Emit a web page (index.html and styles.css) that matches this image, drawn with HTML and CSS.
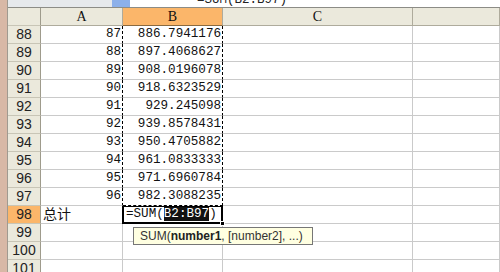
FILE: index.html
```html
<!doctype html>
<html>
<head>
<meta charset="utf-8">
<title>SUM</title>
<link rel="stylesheet" href="styles.css">
</head>
<body>
<div class="win">
	<div class="frame"></div>
	<div class="main">
		<div class="fbar">
			<div class="fbar-l"></div>
			<div class="fbar-blue"></div>
			<div class="fbar-r"><span class="ftext">=SUM(B2:B97)</span></div>
		</div>
		<div class="grid">
			<div class="row head">
				<div class="c rh"></div>
				<div class="c ch">A</div>
				<div class="c ch sel">B</div>
				<div class="c ch">C</div>
				<div class="c ch"></div>
			</div>
			<div class="row"><div class="c rh">88</div><div class="c a">87</div><div class="c b">886.7941176</div><div class="c"></div><div class="c"></div></div>
			<div class="row"><div class="c rh">89</div><div class="c a">88</div><div class="c b">897.4068627</div><div class="c"></div><div class="c"></div></div>
			<div class="row"><div class="c rh">90</div><div class="c a">89</div><div class="c b">908.0196078</div><div class="c"></div><div class="c"></div></div>
			<div class="row"><div class="c rh">91</div><div class="c a">90</div><div class="c b">918.6323529</div><div class="c"></div><div class="c"></div></div>
			<div class="row"><div class="c rh">92</div><div class="c a">91</div><div class="c b">929.245098</div><div class="c"></div><div class="c"></div></div>
			<div class="row"><div class="c rh">93</div><div class="c a">92</div><div class="c b">939.8578431</div><div class="c"></div><div class="c"></div></div>
			<div class="row"><div class="c rh">94</div><div class="c a">93</div><div class="c b">950.4705882</div><div class="c"></div><div class="c"></div></div>
			<div class="row"><div class="c rh">95</div><div class="c a">94</div><div class="c b">961.0833333</div><div class="c"></div><div class="c"></div></div>
			<div class="row"><div class="c rh">96</div><div class="c a">95</div><div class="c b">971.6960784</div><div class="c"></div><div class="c"></div></div>
			<div class="row"><div class="c rh">97</div><div class="c a">96</div><div class="c b last">982.3088235</div><div class="c"></div><div class="c"></div></div>
			<div class="row"><div class="c rh sel">98</div><div class="c t">总计</div><div class="c edit">=SUM(<span class="hl">B2:B97</span>)<span class="caret"></span><span class="handle"></span></div><div class="c"></div><div class="c"></div></div>
			<div class="row"><div class="c rh">99</div><div class="c"></div><div class="c"></div><div class="c"></div><div class="c"></div></div>
			<div class="row"><div class="c rh">100</div><div class="c"></div><div class="c"></div><div class="c"></div><div class="c"></div></div>
			<div class="row"><div class="c rh">101</div><div class="c"></div><div class="c"></div><div class="c"></div><div class="c"></div></div>
			<div class="tip">SUM(<b>number1</b>, [number2], ...)</div>
		</div>
	</div>
</div>
</body>
</html>
```
FILE: styles.css
```css
*{
	margin:0px;
	padding:0px;
	box-sizing:border-box;
}
body{
	width:500px;
	height:272px;
	overflow:hidden;
	background:#fff;
	font-family:"Liberation Mono",monospace;
	color:#111;
}
.win{
	display:flex;
	height:272px;
}
.frame{
	width:8px;
	background:#d8b8a6;
	border-right:1px solid #a09a90;
}
.main{
	flex:1;
	display:flex;
	flex-direction:column;
}
.fbar{
	height:8px;
	display:flex;
	border-bottom:1px solid #8c8c86;
	background:#fff;
}
.fbar-l{width:104px;background:#e6e9ec;}
.fbar-blue{width:18px;background:#8cb0ea;}
.fbar-r{flex:1;overflow:hidden;padding-left:67px;}
.ftext{
	display:block;
	margin-top:-7px;
	font-size:12.5px;
	line-height:14px;
	color:#222;
}
.grid{
	position:relative;
}
.row{
	display:grid;
	grid-template-columns:33px 82px 100px 190px 1fr;
	height:18px;
}
.c{
	border-right:1px solid #cacaca;
	border-bottom:1px solid #cacaca;
	font-size:12.6px;
	line-height:17px;
	white-space:nowrap;
	overflow:hidden;
}
.head .c{
	background:#ebe9dc;
	border-right:1px solid #aeab9c;
	border-bottom:1px solid #aeab9c;
	text-align:center;
	font-family:"Liberation Serif",serif;
	font-size:14px;
}
.head .sel{background:#fbb66a;border-bottom:1px solid #8a6a40;}
.rh{
	background:#ebe9dc;
	border-right:1px solid #9e9b8c !important;
	border-bottom:1px solid #c8c5b6 !important;
	text-align:center;
	font-family:"Liberation Sans",sans-serif;
	font-size:14px;
	color:#222;
}
.rh.sel{background:#fbb66a;}
.a{
	text-align:right;
	padding-right:1px;
	border-right:1px dashed #000;
}
.b{
	text-align:right;
	padding-right:1px;
	border-right:1px dashed #000;
}
.b.last{border-bottom:1px dashed #000;}
.t{
	font-family:"Liberation Sans","Noto Sans CJK SC",sans-serif;
	font-size:14px;
	padding-left:2px;
}
.edit{
	position:relative;
	overflow:visible;
	border:2px solid #000;
	border-top:1px solid #000;
	margin-left:-1px;
	padding-left:2px;
	line-height:15px;
	font-size:12.6px;
}
.hl{
	background:#111;
	color:#fff;
}
.caret{
	display:inline-block;
	width:1px;
	height:14px;
	margin-left:4px;
	vertical-align:middle;
	background:#000;
}
.handle{
	position:absolute;
	right:-4px;
	bottom:-4px;
	width:5px;
	height:5px;
	background:#000;
	border:1px solid #fff;
}
.tip{
	position:absolute;
	left:125px;
	top:219px;
	width:180px;
	height:18px;
	background:#ffffe1;
	border:1px solid #767676;
	font-family:"Liberation Sans",sans-serif;
	font-size:12px;
	line-height:16px;
	padding-left:6px;
	color:#333;
}
.tip b{color:#222;}
```
